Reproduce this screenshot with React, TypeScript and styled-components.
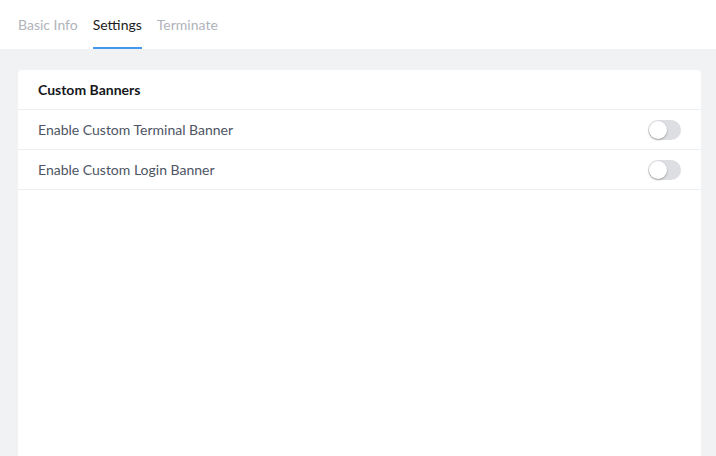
import React from "react";
import styled, { createGlobalStyle } from "styled-components";

const Global = createGlobalStyle`
  html, body { margin: 0; padding: 0; height: 100%; }
  body { background: #f1f2f4; font-family: "Lato", "Open Sans", sans-serif; }
  #root { height: 100%; }
`;

const Page = styled.div`
  display: flex;
  flex-direction: column;
  height: 456px;
  overflow: hidden;
`;

const TabBar = styled.div`
  display: flex;
  gap: 15px;
  padding: 0 18px;
  height: 49px;
  background: #ffffff;
  flex-shrink: 0;
`;

const Tab = styled.div<{ $active?: boolean }>`
  display: flex;
  align-items: center;
  height: 49px;
  box-sizing: border-box;
  padding-top: 2px;
  font-size: 14px;
  color: ${(p) => (p.$active ? "#1b1d21" : "#afb3ba")};
  border-bottom: 2px solid ${(p) => (p.$active ? "#4399ef" : "transparent")};
`;

const Body = styled.div`
  flex: 1;
  display: flex;
  padding: 21px 15px 0 18px;
`;

const Card = styled.div`
  flex: 1;
  background: #ffffff;
  border-radius: 4px 4px 0 0;
`;

const Row = styled.div<{ $header?: boolean }>`
  display: flex;
  align-items: center;
  justify-content: space-between;
  height: 39px;
  padding: 0 20px;
  border-bottom: 1px solid #eeeff1;
  font-size: 14px;
  font-weight: ${(p) => (p.$header ? 700 : 400)};
  color: ${(p) => (p.$header ? "#16181c" : "#4d5464")};
`;

const Track = styled.div`
  width: 33px;
  height: 20px;
  border-radius: 10px;
  background: #dcdee2;
  position: relative;
`;

const Knob = styled.div`
  position: absolute;
  left: 1px;
  top: 1px;
  width: 18px;
  height: 18px;
  border-radius: 50%;
  background: #ffffff;
  box-shadow: 0 1px 2px rgba(0, 0, 0, 0.3);
`;

const Toggle = () => (
  <Track>
    <Knob />
  </Track>
);

export default function App() {
  return (
    <Page>
      <Global />
      <TabBar>
        <Tab>Basic Info</Tab>
        <Tab $active>Settings</Tab>
        <Tab>Terminate</Tab>
      </TabBar>
      <Body>
        <Card>
          <Row $header>Custom Banners</Row>
          <Row>
            Enable Custom Terminal Banner
            <Toggle />
          </Row>
          <Row>
            Enable Custom Login Banner
            <Toggle />
          </Row>
        </Card>
      </Body>
    </Page>
  );
}
